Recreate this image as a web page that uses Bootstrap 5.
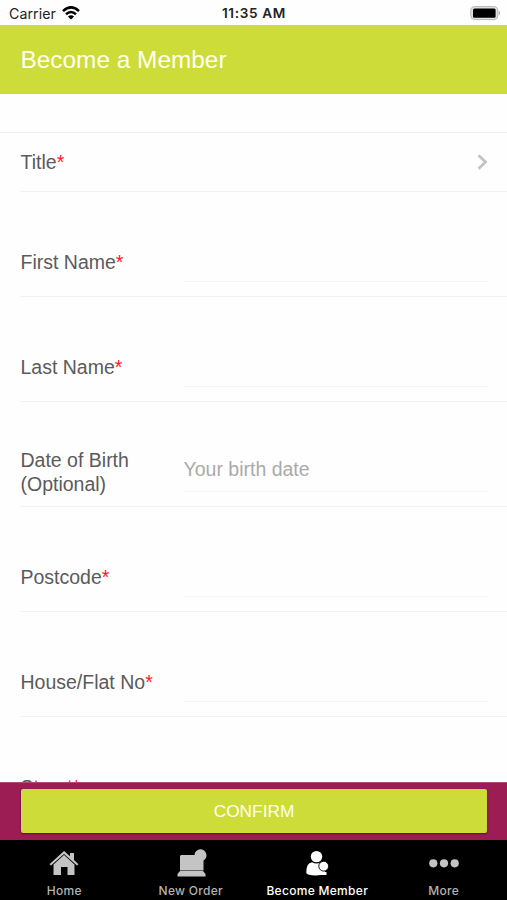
<!DOCTYPE html>
<html lang="en">
<head>
<meta charset="utf-8">
<meta name="viewport" content="width=device-width, initial-scale=1">
<title>Become a Member</title>
<link href="https://cdn.jsdelivr.net/npm/bootstrap@5.3.0/dist/css/bootstrap.min.css" rel="stylesheet">
<style>
  body { font-family: "Liberation Sans", Arial, sans-serif; background: #fefefe; color: #5b5b5b; }
  .statusbar { height: 25px; font: 500 14px/27px Inter, sans-serif; color: #222; padding: 0 6px 0 9px; }
  .statusbar .carrier { font-weight: 400; font-size: 14.2px; letter-spacing: .05px; }
  .statusbar .clock { font-weight: 600; font-size: 13.6px; letter-spacing: .65px; margin-right: 2px; }
  .titlebar { height: 69px; background: #cddc39; color: #fffff0; padding-left: 20.5px; }
  .titlebar h1 { font-size: 24.4px; line-height: 70px; font-weight: 400; }
  .form-area { padding-top: 38px; font-size: 19.5px; line-height: 24px; }
  .title-row { height: 60px; border-top: 1px solid #f1f1f1; padding: 0 19px 2px 20.5px; }
  .rows { margin-left: 20px; }
  .field { height: 105.1px; border-bottom: 1px solid #f2f2f2; padding: 35px 18px 0 .5px; }
  .field:first-child { border-top: 1px solid #f2f2f2; margin-top: -1px; height: 106px; }
  .field label { width: 163px; }
  .req { color: #ff1a1a; }
  .field .form-control { height: 45px; border-bottom: 1px solid #f4f4f4; font-size: 19.5px; margin-bottom: 4px; }
  .field .form-control::placeholder { color: #aaa; }
  .action { height: 58px; background: #9c1c54; padding: 6px 20px 7px 21px; border-top: 1px solid #ae4b77; }
  .action .btn { background: #cddc39; color: #fffff0; font-size: 17.3px; line-height: 20px; border-radius: 2px; box-shadow: 0 1px 2px rgba(0,0,0,.45); }
  .tabs { height: 60px; background: #000; font: 500 12px/14px Inter, sans-serif; letter-spacing: .3px; padding-left: 1px; }
  .tabs a { color: #b2b2b2; width: 126.5px; padding-top: 8px; }
  .tabs a.current { color: #fff; }
  .tabs svg { width: 32px; height: 32px; margin-bottom: 4px; fill: #c4c4c4; }
  .tabs .current svg { fill: #fff; }
</style>
<script src="https://cdn.jsdelivr.net/npm/bootstrap@5.3.0/dist/js/bootstrap.bundle.min.js"></script>
</head>
<body class="d-flex flex-column vh-100 overflow-hidden">
  <div class="statusbar d-flex flex-shrink-0">
    <div class="col d-flex gap-2">
      <span class="carrier">Carrier</span>
      <svg width="18" height="14" viewBox="0 0 18 14" style="margin:6px 0 0 -2px" fill="none" stroke="#000" stroke-width="2.5">
        <path d="M1 5.1Q9 -2.3 17 5.1M4 8.3Q9 3.8 14 8.3"/><path d="M9 13.6L5.9 10.5Q9 7.8 12.1 10.5Z" fill="#000" stroke="none"/>
      </svg>
    </div>
    <div class="clock">11:35 AM</div>
    <div class="col text-end lh-1">
      <svg width="31" height="15" viewBox="0 0 31 15" style="margin-top:6px">
        <rect x=".8" y=".6" width="27" height="13" rx="4" fill="#e2e2e2" stroke="#b5b5b5"/><path d="M28.8 4.5Q31.5 7 28.8 9.5Z" fill="#aaa"/><rect x="3" y="2.6" width="22.6" height="9.2" rx="1.5"/>
      </svg>
    </div>
  </div>
  <header class="titlebar flex-shrink-0"><h1 class="m-0">Become a Member</h1></header>
  <main class="form-area flex-fill overflow-hidden">
    <div class="title-row d-flex align-items-center justify-content-between">
      <span>Title<span class="req">*</span></span>
      <svg width="11" height="16" viewBox="0 0 11 16" fill="none" stroke="#c4c4c4" stroke-width="2.8"><path d="M1.5 1.3L8.5 8L1.5 14.7"/></svg>
    </div>
    <form class="rows">
      <div class="field d-flex align-items-center"><label for="first">First Name<span class="req">*</span></label><input id="first" class="form-control flex-fill w-auto border-top-0 border-start-0 border-end-0 rounded-0 bg-transparent p-0"></div>
      <div class="field d-flex align-items-center"><label for="last">Last Name<span class="req">*</span></label><input id="last" class="form-control flex-fill w-auto border-top-0 border-start-0 border-end-0 rounded-0 bg-transparent p-0"></div>
      <div class="field d-flex align-items-center"><label for="birth">Date of Birth<br>(Optional)</label><input id="birth" class="form-control flex-fill w-auto border-top-0 border-start-0 border-end-0 rounded-0 bg-transparent p-0" placeholder="Your birth date"></div>
      <div class="field d-flex align-items-center"><label for="post">Postcode<span class="req">*</span></label><input id="post" class="form-control flex-fill w-auto border-top-0 border-start-0 border-end-0 rounded-0 bg-transparent p-0"></div>
      <div class="field d-flex align-items-center"><label for="house">House/Flat No<span class="req">*</span></label><input id="house" class="form-control flex-fill w-auto border-top-0 border-start-0 border-end-0 rounded-0 bg-transparent p-0"></div>
      <div class="field d-flex align-items-center"><label for="street">Street<span class="req">*</span></label><input id="street" class="form-control flex-fill w-auto border-top-0 border-start-0 border-end-0 rounded-0 bg-transparent p-0"></div>
    </form>
  </main>
  <div class="action flex-shrink-0"><button class="btn w-100 h-100 border-0 p-0">CONFIRM</button></div>
  <nav class="tabs d-flex flex-shrink-0">
    <a href="#" class="d-flex flex-column align-items-center text-decoration-none text-nowrap">
      <svg viewBox="0 0 32 32"><path d="M16 3L22 8.3V5H26V12L30.5 16.3L29 17.5L16 6L3 17.5L1.5 16.3Z"/><path d="M16 7L26.5 16.5V27H19.5V19H13V27H5.5V16.5Z"/></svg>
      <span>Home</span>
    </a>
    <a href="#" class="d-flex flex-column align-items-center text-decoration-none text-nowrap">
      <svg viewBox="0 0 32 32"><path d="M6 7H19.5A6 6 0 1 1 28.5 12.5V22.5H5V8Z"/><path d="M5 23H28L30.5 26V28.5H2.5V26Z"/></svg>
      <span>New Order</span>
    </a>
    <a href="#" class="current d-flex flex-column align-items-center text-decoration-none text-nowrap">
      <svg viewBox="0 0 32 32"><circle cx="15.5" cy="8.6" r="5.7"/><path d="M5.3 24.5Q5 15 11 14.2Q15.5 17 20 14.2L24 17V26Q16 28.5 7 26.5Q5.3 26 5.3 24.5Z"/><path d="M19 24H25.5V27H19Z"/><circle cx="22.7" cy="18.2" r="4.9" stroke="#000" stroke-width=".9"/></svg>
      <span>Become Member</span>
    </a>
    <a href="#" class="d-flex flex-column align-items-center text-decoration-none text-nowrap">
      <svg viewBox="0 0 32 32"><circle cx="5.3" cy="15.3" r="4.1"/><circle cx="16" cy="15.3" r="4.1"/><circle cx="26.7" cy="15.3" r="4.1"/></svg>
      <span>More</span>
    </a>
  </nav>
</body>
</html>
